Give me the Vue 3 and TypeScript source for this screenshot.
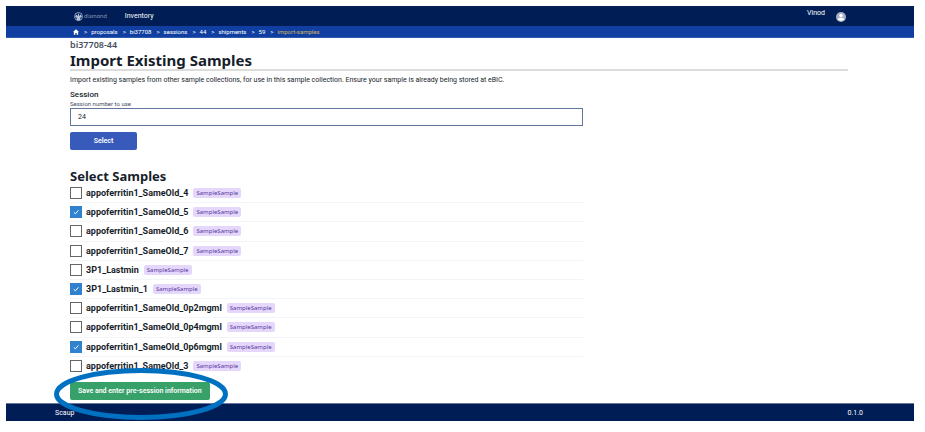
<script setup lang="ts">
import { ref } from 'vue'

interface Sample {
  name: string
  type: string
  checked: boolean
}

const crumbs: string[] = ['proposals', 'bi37708', 'sessions', '44', 'shipments', '59']
const session = ref('24')

const sample = (name: string, checked = false): Sample => ({ name, type: 'SampleSample', checked })

const samples = ref<Sample[]>([
  sample('appoferritin1_SameOld_4'),
  sample('appoferritin1_SameOld_5', true),
  sample('appoferritin1_SameOld_6'),
  sample('appoferritin1_SameOld_7'),
  sample('3P1_Lastmin'),
  sample('3P1_Lastmin_1', true),
  sample('appoferritin1_SameOld_0p2mgml'),
  sample('appoferritin1_SameOld_0p4mgml'),
  sample('appoferritin1_SameOld_0p6mgml', true),
  sample('appoferritin1_SameOld_3'),
])
</script>

<template>
  <div class="page">
    <header class="navbar">
      <a href="#" class="logo" aria-label="diamond">
        <svg class="logo-mark" viewBox="0 0 18 18" aria-hidden="true">
          <circle cx="9" cy="9" r="8" fill="none" stroke="#a9b5cf" stroke-width="1.6" />
          <path d="M2 9 L5 5 L7 7 L9 2 L11 7 L13 5 L16 9 L12.500 12 V17 H5.500 V12 Z" fill="#b4bfd6" />
          <path d="M7 4 L7 8 M11 4 L11 8" fill="none" stroke="#001d55" stroke-width="1" />
        </svg>
        <span>diamond</span>
      </a>
      <a href="#" class="nav-link">Inventory</a>
      <div class="user">
        <span class="user-name">Vinod</span>
        <svg class="avatar" viewBox="0 0 20 20" aria-hidden="true">
          <circle cx="10" cy="10" r="10" fill="#a3afc2" />
          <circle cx="10" cy="7" r="3.600" fill="#fff" />
          <path d="M3.500 15 C3.500 10.500 16.500 10.500 16.500 15 C13 18.500 7 18.500 3.500 15 Z" fill="#fff" />
        </svg>
      </div>
    </header>

    <nav class="breadcrumb" aria-label="Breadcrumb">
      <a href="#" class="home" aria-label="Home">
        <svg viewBox="0 0 12 12" aria-hidden="true">
          <path d="M6 0.500 L12 6 H10.300 V11.500 H7.300 V8 H4.700 V11.500 H1.700 V6 H0 Z" fill="#fff" />
        </svg>
      </a>
      <template v-for="crumb in crumbs" :key="crumb">
        <span class="separator">&gt;</span>
        <a href="#">{{ crumb }}</a>
      </template>
      <span class="separator">&gt;</span>
      <a href="#" class="current" aria-current="page">import-samples</a>
    </nav>

    <main class="content">
      <div class="title">
        <h2 class="proposal">bi37708-44</h2>
        <h1>Import Existing Samples</h1>
      </div>
      <p class="intro">
        Import existing samples from other sample collections, for use in this sample collection. Ensure your sample is
        already being stored at eBIC.
      </p>

      <form class="form" @submit.prevent>
        <label class="label" for="session">Session</label>
        <span id="session-help" class="help">Session number to use</span>
        <input id="session" v-model="session" class="input" type="text" aria-describedby="session-help" />
        <button type="button" class="button select">Select</button>

        <h2 class="subtitle">Select Samples</h2>
        <ul class="samples">
          <li v-for="item in samples" :key="item.name">
            <label class="sample">
              <input v-model="item.checked" type="checkbox" />
              <svg v-if="item.checked" class="tick" viewBox="0 0 12 12" aria-hidden="true">
                <path d="M3.800 6.300 L5.400 7.800 L8.400 4.400" fill="none" stroke="#fff" stroke-width="1" />
              </svg>
              <span class="name">{{ item.name }}</span>
              <span class="tag">{{ item.type }}</span>
            </label>
          </li>
        </ul>

        <div class="save">
          <button type="submit" class="button submit">Save and enter pre-session information</button>
          <svg class="highlight" viewBox="0 0 174 54" aria-hidden="true">
            <ellipse cx="87" cy="27" rx="84.500" ry="23.500" fill="none" stroke="#0070c0" stroke-width="5" />
          </svg>
        </div>
      </form>
    </main>

    <footer class="footer">
      <span>Scaup</span>
      <span>0.1.0</span>
    </footer>
  </div>
</template>

<style>
body {
  background: #fff;
}
</style>

<style scoped>
.page {
  margin: 6px 11px 0 6px;
  color: #171e2b;
  font-family: Roboto, "Noto Sans", sans-serif;
  font-size: 7px;
  line-height: 10px;
}

.page * {
  box-sizing: border-box;
}

a {
  color: inherit;
  text-decoration: none;
}

h1,
h2,
p,
ul {
  margin: 0;
  padding: 0;
}

input,
button {
  margin: 0;
  font: inherit;
}

.navbar {
  display: flex;
  align-items: center;
  height: 20px;
  padding: 0 68px;
  background: #001d55;
  color: #fff;
}

.logo {
  display: flex;
  align-items: center;
  gap: 1px;
  color: #8795b7;
  font-family: Lato, sans-serif;
  font-size: 6px;
}

.logo-mark {
  width: 9px;
  height: 9px;
}

.nav-link {
  margin-left: 18px;
}

.user {
  display: flex;
  align-items: flex-start;
  gap: 11px;
  margin-left: auto;
}

.user-name {
  line-height: 6px;
}

.avatar {
  width: 10px;
  height: 10px;
  margin-top: 2px;
}

.breadcrumb {
  display: flex;
  align-items: center;
  gap: 4px;
  height: 12px;
  padding: 0 67px;
  border-bottom: 1px solid #2f5bb0;
  background: #103fa1;
  color: #fff;
  font-size: 6px;
}

.home {
  display: flex;
}

.home svg {
  width: 6px;
  height: 6px;
}

.separator {
  padding-left: 1px;
}

.current {
  color: #d3b45f;
}

.content {
  padding: 0 66px 0 64px;
}

.title {
  border-bottom: 2px solid #dcdcdc;
  font-family: "Noto Sans", sans-serif;
}

.proposal {
  color: #474f5d;
  font-size: 9px;
  font-weight: 600;
  line-height: 13px;
}

h1 {
  font-size: 15px;
  font-weight: 700;
  line-height: 18px;
}

.intro {
  padding-top: 4px;
}

.form {
  display: flex;
  flex-direction: column;
  align-items: flex-start;
  width: 66%;
}

.label {
  margin-top: 5px;
  font-size: 8px;
  font-weight: 500;
}

.help {
  color: #3f4e66;
  font-size: 6px;
  line-height: 8px;
}

.input {
  width: 100%;
  height: 18px;
  padding: 0 7px;
  border: 1px solid #62779f;
  background: #fff;
  color: #171e2b;
}

.button {
  height: 18px;
  border: 0;
  border-radius: 2px;
  color: #fff;
  font-weight: 600;
}

.select {
  width: 67px;
  margin-top: 6px;
  background: #385bbb;
}

.subtitle {
  margin-top: 18px;
  font-family: "Noto Sans", sans-serif;
  font-size: 13px;
  font-weight: 700;
  line-height: 16px;
}

.samples {
  display: grid;
  grid-auto-rows: 1fr;
  width: 100%;
  min-height: 192px;
  list-style: none;
}

.samples li {
  display: flex;
  align-items: center;
  border-bottom: 1px solid #f3f4f8;
}

.samples li:last-child {
  border-bottom-color: transparent;
}

.sample {
  display: grid;
  grid-template-columns: 12px auto auto;
  align-items: center;
}

.sample input {
  grid-area: 1 / 1;
  width: 12px;
  height: 12px;
  border: 1px solid #666;
  appearance: none;
  background: #fff;
}

.sample input:checked {
  border-color: #3182ce;
  background: #3182ce;
}

.tick {
  grid-area: 1 / 1;
  width: 12px;
  height: 12px;
  pointer-events: none;
}

.name {
  margin-left: 4px;
  font-size: 9px;
  font-weight: 700;
}

.tag {
  margin-left: 5px;
  padding: 0 3px;
  border-radius: 2px;
  background: #e5d7fb;
  color: #57389b;
  font-family: "Noto Sans", sans-serif;
  font-size: 6px;
}

.save {
  position: relative;
  margin-top: 6px;
}

.submit {
  display: block;
  padding: 0 8px;
  background: #38a169;
}

.highlight {
  position: absolute;
  top: -15px;
  left: -16px;
  width: 174px;
  height: 54px;
  pointer-events: none;
}

.footer {
  display: flex;
  align-items: center;
  justify-content: space-between;
  height: 18px;
  margin-top: 3px;
  padding: 0 51px 0 49px;
  border-top: 1px solid #65779c;
  background: #001d55;
  color: #fff;
}
</style>
